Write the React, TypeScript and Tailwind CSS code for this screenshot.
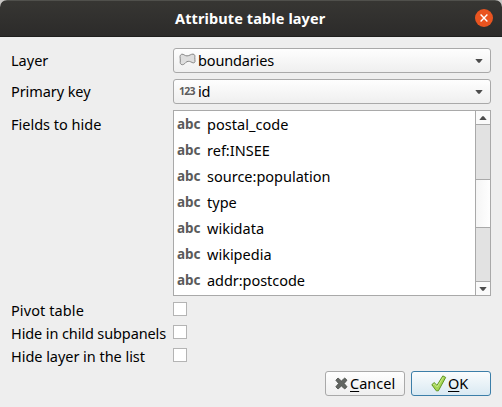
import React from "react";

type Field = { name: string; tracking: string };

const fields: Field[] = [
  { name: "postal_code", tracking: "tracking-[0.05px]" },
  { name: "ref:INSEE", tracking: "tracking-[0px]" },
  { name: "source:population", tracking: "tracking-[0px]" },
  { name: "type", tracking: "tracking-[0px]" },
  { name: "wikidata", tracking: "tracking-[0px]" },
  { name: "wikipedia", tracking: "tracking-[0px]" },
  { name: "addr:postcode", tracking: "tracking-[-0.05px]" },
];

const options: Field[] = [
  { name: "Pivot table", tracking: "tracking-[0.1px]" },
  { name: "Hide in child subpanels", tracking: "tracking-[-0.11px]" },
  { name: "Hide layer in the list", tracking: "tracking-[-0.04px]" },
];

function Arrow({ className = "" }: { className?: string }) {
  return (
    <svg width="8" height="4" viewBox="0 0 8 4" className={className}>
      <path d="M.3 0h7.400L4.700 3.700H3.300z" fill="#4c4c4c" />
    </svg>
  );
}

function PolygonIcon() {
  return (
    <svg width="17" height="13" viewBox="0 0 17 13" className="-mt-px">
      <path
        d="M3 1.200C4.600 1 5.800 2.900 8 2.900c2.500 0 4-2 6-1.800 1.700.2 2.200 1.500 1.800 3.200-.3 1.500.5 2.800.2 4.300-.4 1.500-1.800 1.500-3.100.8-1.600-.9-3.200-1.500-5-.7-1.700.8-2.500 3-4.500 3C1.300 11.700.9 9.700 1.300 8 1.700 6.500.8 5.200 1 3.600 1.200 2.200 1.900 1.300 3 1.200z"
        fill="#dedede"
        stroke="#858585"
        strokeWidth="1"
      />
    </svg>
  );
}

function Combo({ icon, children }: { icon: React.ReactNode; children: React.ReactNode }) {
  return (
    <div className="flex h-[25px] w-[318px] items-center rounded-[3px] border border-[#a9a9a9] bg-linear-to-b from-[#fefefe] to-[#efefef] pr-[7px] pb-px pl-[5px]">
      <span className="flex w-[19px] shrink-0 items-center">{icon}</span>
      <span className="flex-1">{children}</span>
      <Arrow className="mt-[2px]" />
    </div>
  );
}

export default function App() {
  return (
    <div className="h-[407px] w-[502px] overflow-hidden bg-[#c9c7c5] font-['Noto_Sans',sans-serif] text-[14.5px] leading-[20px] whitespace-nowrap text-black">
      <div className="flex h-full flex-col overflow-hidden rounded-t-[7px] bg-[#eeeeee]">
        <header className="flex h-[37px] shrink-0 items-center border-t border-b border-t-[#50504c] border-b-[#1f1f1e] bg-linear-to-b from-[#373633] to-[#2c2b2a] pr-[9px] pb-px">
          <h1 className="ml-[175px] flex-1 text-[14.5px] font-bold text-white">
            <span className="tracking-[0.11px]">Attribute table layer</span>
          </h1>
          <button className="flex size-[18px] items-center justify-center rounded-full bg-[#e95420]">
            <svg width="8" height="8" viewBox="0 0 8 8">
              <path d="M.6.6l6.800 6.800M7.400.6L.6 7.400" stroke="#fff" strokeWidth="1.400" />
            </svg>
          </button>
        </header>

        <main className="flex flex-1 flex-col pt-[11px] pr-[11px] pl-[11px]">
          <div className="flex h-[25px] items-center">
            <label className="w-[162px] pb-px">Layer</label>
            <Combo icon={<PolygonIcon />}><span className="tracking-[-0.15px]">boundaries</span></Combo>
          </div>
          <div className="mt-[6px] flex h-[25px] items-center">
            <label className="w-[162px] pb-px"><span className="tracking-[-0.08px]">Primary key</span></label>
            <Combo icon={<span className="text-[10.5px] font-bold tracking-[-0.7px] text-[#5c5c5c]">123</span>}>
              <span className="tracking-[-0.3px]">id</span>
            </Combo>
          </div>
          <div className="mt-[6px] flex h-[186px]">
            <label className="w-[162px] pt-[4px]">Fields to hide</label>
            <div className="flex w-[318px] border border-[#a9a9a9] bg-white">
              <ul className="flex-1 pl-[3px]">
                {fields.map((f) => (
                  <li key={f.name} className="flex h-[26px] items-center">
                    <span className="w-[30px] text-[13.5px] font-bold text-[#5b5b5b]">abc</span>
                    <span className={f.tracking}>{f.name}</span>
                  </li>
                ))}
              </ul>
              <div className="flex w-[15px] flex-col border-l border-[#a9a9a9]">
                <div className="flex h-[13px] items-center justify-center bg-[#fafafa]"><Arrow className="rotate-180" /></div>
                <div className="h-[55px] border-t border-[#a9a9a9] bg-[#e2e2e2]" />
                <div className="h-[49px] border-y border-[#a9a9a9] bg-linear-to-r from-[#f5f5f5] to-[#fefefe]" />
                <div className="flex-1 bg-[#e2e2e2]" />
                <div className="flex h-[14px] items-center justify-center border-t border-[#a9a9a9] bg-[#fafafa]"><Arrow /></div>
              </div>
            </div>
          </div>
          <div className="mt-[6px] flex flex-col gap-[9px]">
            {options.map((o) => (
              <div key={o.name} className="flex h-[14px] items-center">
                <label className="w-[162px] pt-[2px]"><span className={o.tracking}>{o.name}</span></label>
                <span className="size-[14px] border border-[#b4b4b4] bg-white" />
              </div>
            ))}
          </div>
          <div className="mt-[9px] flex justify-end gap-[6px]">
            <button className="flex h-[25px] w-[80px] items-center rounded-[3px] border border-[#a9a9a9] bg-linear-to-b from-[#fefefe] to-[#efefef] pb-px pl-[9px]">
              <svg width="13" height="13" viewBox="0 0 13 13" className="mr-[2px]">
                <path d="M.8 3.200L3 1l3.400 2.900L9.800 1 12 3.200 9.200 6.500 12 9.800 9.800 12 6.400 9.100 3 12 .8 9.800l2.800-3.300z" fill="#626662" stroke="#484b48" strokeWidth=".8" strokeLinejoin="round" />
              </svg>
              <span><span className="underline decoration-1 underline-offset-2">C</span>ancel</span>
            </button>
            <button className="flex h-[25px] w-[80px] items-center rounded-[3px] border border-[#3c7ea8] bg-linear-to-b from-[#fafcfd] to-[#d9e9f2] pb-px pl-[19px]">
              <svg width="16" height="17" viewBox="0 0 16 17" className="mr-px">
                <path d="M.8 9.700L3.200 7.600 6 10.400 11.800.9l2.900 1.500L7.400 15.800H5.300z" fill="#a6d655" stroke="#5e9423" strokeWidth="1" strokeLinejoin="round" />
                <path d="M2.200 9.700l1-.8 3 3L12.200 2.300" fill="none" stroke="#c9ea8c" strokeWidth="1" />
              </svg>
              <span><span className="underline decoration-1 underline-offset-2">O</span>K</span>
            </button>
          </div>
        </main>
      </div>
    </div>
  );
}
